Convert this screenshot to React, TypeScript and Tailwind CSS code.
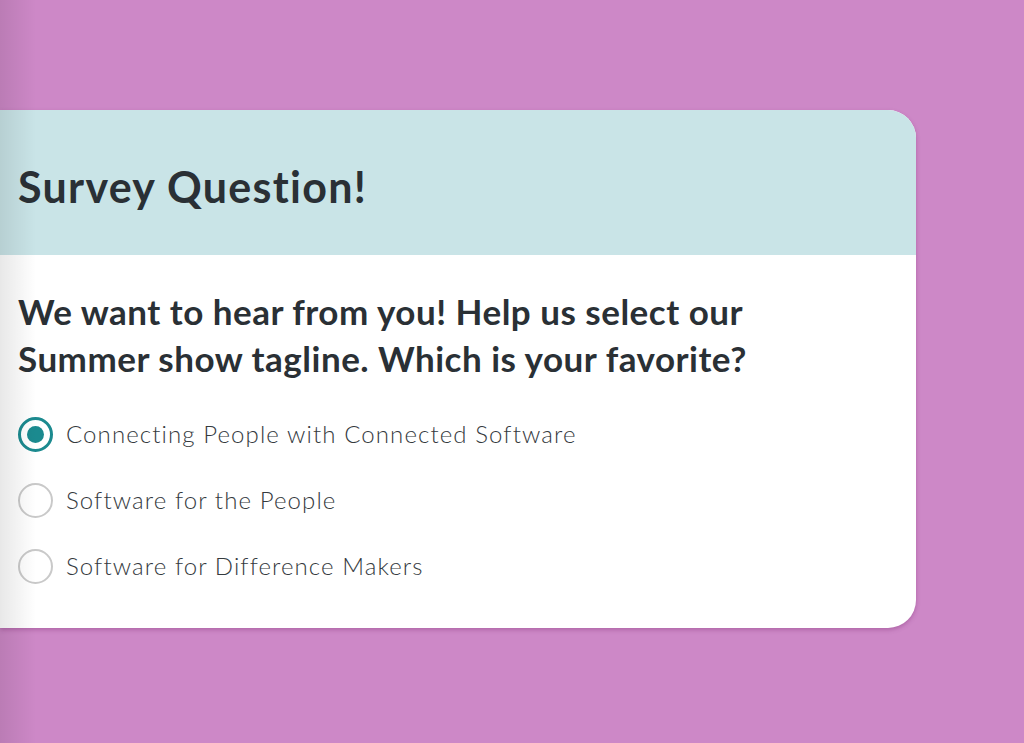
import React, { useState } from 'react';

const options = [
  'Connecting People with Connected Software',
  'Software for the People',
  'Software for Difference Makers',
];

export default function App() {
  const [selected, setSelected] = useState(0);

  return (
    <div
      className="relative min-h-[743px] w-full overflow-hidden bg-[#cd88c7] pt-[110px]"
      style={{ fontFamily: 'Lato, "Noto Sans", sans-serif' }}
    >
      <div className="w-[916px] overflow-hidden rounded-r-[28px] bg-white shadow-[0_2px_4px_rgba(120,40,110,0.35)]">
        <div className="flex h-[145px] items-center bg-[#c9e4e7] px-[18px] pt-[10px]">
          <h1 className="text-[43px] font-bold tracking-[1.3px] text-[#2a3035]">Survey Question!</h1>
        </div>

        <div className="px-[18px] pt-[33px] pb-[44px]">
          <p className="text-[35px] font-bold leading-[47px] tracking-[0.5px] text-[#2a3035]">
            We want to hear from you! Help us select our
            <br />
            Summer show tagline. Which is your favorite?
          </p>

          <div className="mt-[34px] flex flex-col gap-[30px]">
            {options.map((opt, i) => {
              const isOn = selected === i;
              return (
                <label
                  key={opt}
                  className="flex cursor-pointer items-center gap-[13px]"
                  onClick={() => setSelected(i)}
                >
                  <span
                    className={
                      isOn
                        ? 'flex h-[35px] w-[35px] items-center justify-center rounded-full border-[3px] border-[#1b8a8f]'
                        : 'flex h-[35px] w-[35px] items-center justify-center rounded-full border-[2.5px] border-[#c9c9c9]'
                    }
                  >
                    {isOn && <span className="h-[17px] w-[17px] rounded-full bg-[#1b8a8f]" />}
                  </span>
                  <span className="text-[24px] font-light tracking-[1.1px] text-[#353a3e]">{opt}</span>
                </label>
              );
            })}
          </div>
        </div>
      </div>

      {/* left edge shade */}
      <div className="pointer-events-none absolute inset-y-0 left-0 w-[36px] bg-gradient-to-r from-[rgba(0,0,0,0.09)] to-transparent" />
    </div>
  );
}
